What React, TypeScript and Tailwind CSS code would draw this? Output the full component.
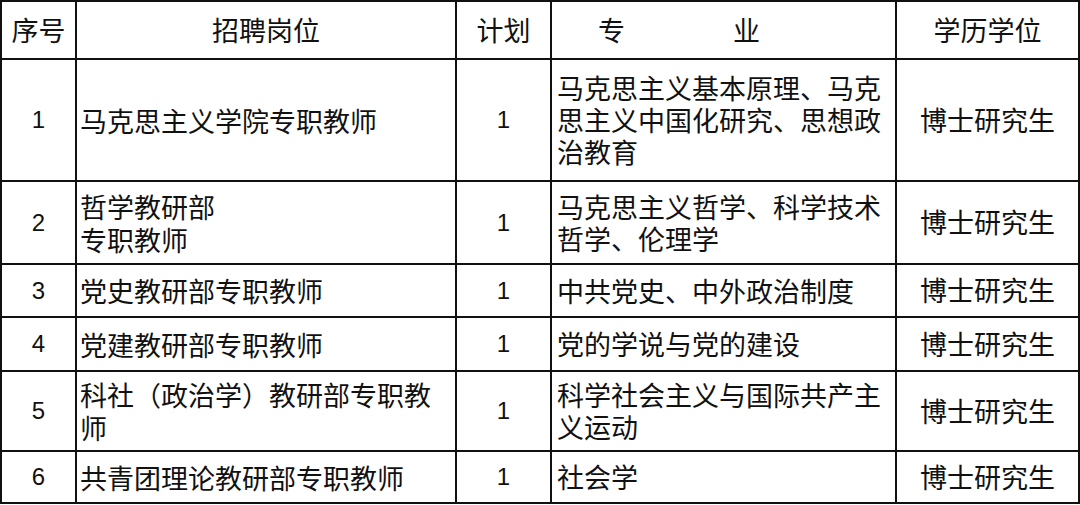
import React from "react";

const cjk = "font-['Noto_Sans_CJK_SC','Noto_Sans',sans-serif]";
const num = "font-['Liberation_Sans',Arial,sans-serif]";

type Row = { n: string; pos: React.ReactNode; major: React.ReactNode; h: string };

const rows: Row[] = [
  {
    n: "1",
    pos: "马克思主义学院专职教师",
    major: (
      <>
        马克思主义基本原理、马克
        <br />
        思主义中国化研究、思想政
        <br />
        治教育
      </>
    ),
    h: "h-[120px]",
  },
  {
    n: "2",
    pos: (
      <>
        哲学教研部
        <br />
        专职教师
      </>
    ),
    major: (
      <>
        马克思主义哲学、科学技术
        <br />
        哲学、伦理学
      </>
    ),
    h: "h-[81px]",
  },
  { n: "3", pos: "党史教研部专职教师", major: "中共党史、中外政治制度", h: "h-[51px]" },
  { n: "4", pos: "党建教研部专职教师", major: "党的学说与党的建设", h: "h-[52px]" },
  {
    n: "5",
    pos: (
      <>
        科社（政治学）教研部专职教
        <br />师
      </>
    ),
    major: (
      <>
        科学社会主义与国际共产主
        <br />
        义运动
      </>
    ),
    h: "h-[78px]",
  },
  { n: "6", pos: "共青团理论教研部专职教师", major: "社会学", h: "h-[50px]" },
];

export default function App() {
  return (
    <div className="w-[1080px] h-[505px] bg-white overflow-hidden">
      <div
        className={`grid grid-cols-[73px_378px_93px_343px_181px] gap-[2px] p-[2px] bg-[#111] w-[1080px] text-[27px] text-[#111] ${cjk}`}
      >
        {/* header */}
        <div className="bg-white h-[56px] flex items-center justify-center">序号</div>
        <div className="bg-white h-[56px] flex items-center justify-center">招聘岗位</div>
        <div className="bg-white h-[56px] flex items-center justify-center">计划</div>
        <div className="bg-white h-[56px] flex items-center pl-[46px] gap-[108px]">
          <span>专</span>
          <span>业</span>
        </div>
        <div className="bg-white h-[56px] flex items-center justify-center">学历学位</div>

        {rows.map((r) => (
          <React.Fragment key={r.n}>
            <div className={`bg-white ${r.h} flex items-center justify-center ${num} text-[24px]`}>{r.n}</div>
            <div className={`bg-white ${r.h} flex items-center pl-[3px] leading-[33px] whitespace-nowrap`}>
              <div>{r.pos}</div>
            </div>
            <div className={`bg-white ${r.h} flex items-center justify-center ${num} text-[24px]`}>1</div>
            <div className={`bg-white ${r.h} flex items-center pl-[5px] leading-[32px] whitespace-nowrap`}>
              <div>{r.major}</div>
            </div>
            <div className={`bg-white ${r.h} flex items-center justify-center`}>博士研究生</div>
          </React.Fragment>
        ))}
      </div>
    </div>
  );
}
